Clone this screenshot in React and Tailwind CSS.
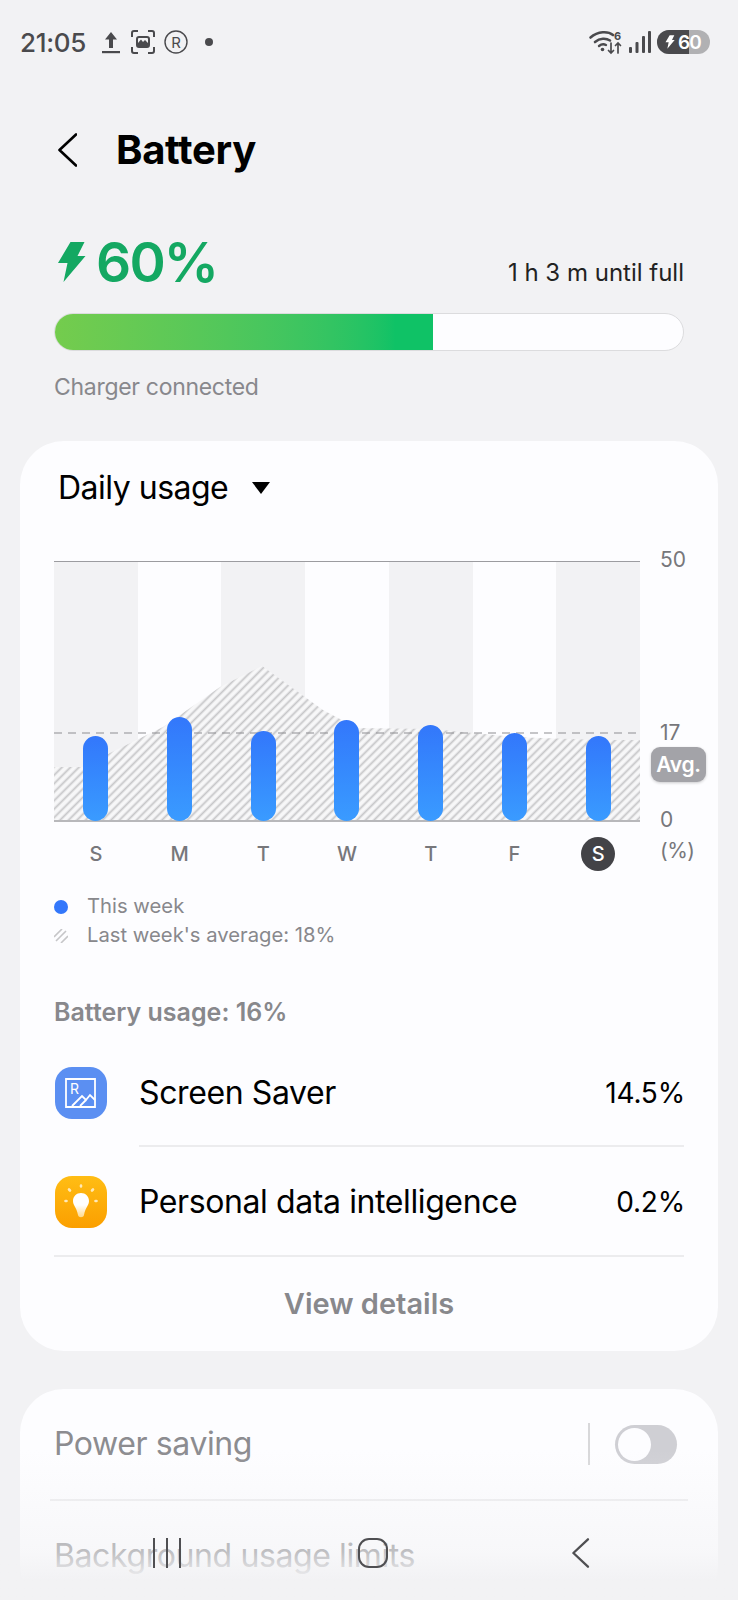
const days = [
  { label: "S", top: 736 },
  { label: "M", top: 717 },
  { label: "T", top: 731 },
  { label: "W", top: 720 },
  { label: "T", top: 725 },
  { label: "F", top: 733 },
  { label: "S", top: 736, today: true },
];

const PLOT_BOTTOM = 821;

function Chevron({ className }) {
  return (
    <svg viewBox="0 0 20 34" fill="none" className={className}>
      <path d="M19 1.5 2.5 17 19 32.5" stroke="currentColor" strokeWidth="2.6" strokeLinecap="round" strokeLinejoin="round" />
    </svg>
  );
}

function Bolt({ className }) {
  return (
    <svg viewBox="0 0 28 42" className={className}>
      <path d="M13 1h14l-7 14h8L6 41l4-19H0.5z" fill="currentColor" />
    </svg>
  );
}

function StatusBar() {
  return (
    <div className="h-[84px] flex items-center pl-[20px] pr-[28px] text-[#4a4a4d]">
      <span className="text-[26px] font-medium tracking-[-0.3px] w-[82px]">21:05</span>
      <svg viewBox="0 0 18 24" className="w-[18px] h-[24px]">
        <path d="M9 2 15 9.5H11V18H7V9.5H3z" fill="currentColor" />
        <rect x="0" y="21" width="18" height="2.2" fill="currentColor" />
      </svg>
      <svg viewBox="0 0 24 24" className="w-[24px] h-[24px] ml-[11px]" fill="none" stroke="currentColor" strokeWidth="2">
        <path d="M7 1H3Q1 1 1 3V7M17 1H21Q23 1 23 3V7M1 17V21Q1 23 3 23H7M23 17V21Q23 23 21 23H17" />
        <rect x="6" y="7" width="12" height="10" rx="2" />
        <path d="M7 13 10 9.500 12 12 14 10 17 13V16H7z" fill="currentColor" stroke="none" />
      </svg>
      <svg viewBox="0 0 24 24" className="w-[24px] h-[24px] ml-[9px]" fill="none" stroke="currentColor" strokeWidth="1.4">
        <circle cx="12" cy="12" r="11" />
        <text x="12" y="17.500" textAnchor="middle" fontSize="15" fill="currentColor" stroke="none" fontFamily="Inter, sans-serif">R</text>
      </svg>
      <span className="w-[8px] h-[8px] rounded-full bg-[#4a4a4d] ml-[17px]" />
      <div className="ml-auto flex items-center">
        <svg viewBox="0 0 34 24" className="w-[34px] h-[24px] overflow-visible" fill="none" stroke="currentColor" strokeLinecap="round">
          <path d="M1.500 7.500C9 1 19 1 24 5" strokeWidth="2.6" />
          <path d="M6 12C11 8 17 8 21 10.500" strokeWidth="2.6" />
          <path d="M10 16C12.500 14 15 14 17 15" strokeWidth="2.4" />
          <circle cx="13.500" cy="19.500" r="1.800" fill="currentColor" stroke="none" />
          <path d="M22 13V23M19.500 20.500 22 23 24.500 20.500M29 23V13M26.500 15.500 29 13 31.500 15.500" strokeWidth="1.700" />
          <text x="25" y="10" fontSize="11" fontWeight="700" fill="currentColor" stroke="none" fontFamily="Inter, sans-serif">6</text>
        </svg>
        <svg viewBox="0 0 22 24" className="w-[22px] h-[24px] ml-[6px]" fill="currentColor">
          <rect x="0" y="17" width="3" height="6" rx="1" />
          <rect x="6.500" y="12" width="3" height="11" rx="1" />
          <rect x="13" y="6" width="3" height="17" rx="1" />
          <rect x="19" y="1" width="3" height="22" rx="1" />
        </svg>
        <div className="relative ml-[6px] w-[53px] h-[24px] rounded-full overflow-hidden bg-[#b1b1b3]">
          <div className="absolute left-0 top-0 h-full w-[32px] bg-[#4a4a4d]" />
          <div className="relative h-full flex items-center pl-[8px] text-white">
            <Bolt className="w-[10px] h-[14px]" />
            <span className="ml-[3px] text-[19px] leading-none font-semibold tracking-[-0.8px]">60</span>
          </div>
        </div>
      </div>
    </div>
  );
}

function Chart() {
  return (
    <div className="flex mt-[12px]">
      <div className="w-[586px] shrink-0 pt-[14px]">
        <div className="relative h-[261px] border-t border-[#9c9ca0] border-b-2 border-b-[#b8b8bb]">
          <div className="grid grid-cols-7 h-full">
            {days.map((d, i) => (
              <div key={i} className={i % 2 === 0 ? "bg-[#f2f2f4]" : "bg-[#fdfdff]"} />
            ))}
          </div>
          <svg viewBox="0 0 586 259" className="absolute left-0 top-[-1px] w-[586px] h-[259px]">
            <defs>
              <pattern id="hatch" width="6" height="6" patternUnits="userSpaceOnUse" patternTransform="rotate(45)">
                <rect width="6" height="6" fill="#f7f7f8" />
                <line x1="1.500" y1="0" x2="1.500" y2="6" stroke="#c6c6c8" strokeWidth="1.800" />
              </pattern>
            </defs>
            <path
              d="M0 206 L30 206 L56 192 L109 166 L166 126 L208 105 L269 149 L303 167 L377 168 L460 176 L544 179 L586 179 V259 H0 Z"
              fill="url(#hatch)"
            />
            <line x1="0" y1="172" x2="586" y2="172" stroke="#8e8e92" strokeWidth="1.2" strokeDasharray="8 6" />
          </svg>
          <div className="absolute inset-x-0 top-0 -bottom-[1px] grid grid-cols-7 items-end">
            {days.map((d, i) => (
              <div key={i} className="flex justify-center">
                <div
                  className="w-[25px] rounded-full bg-linear-to-b from-[#3377fb] to-[#3a9bff]"
                  style={{ height: PLOT_BOTTOM - d.top }}
                />
              </div>
            ))}
          </div>
        </div>
        <div className="grid grid-cols-7 mt-[15px] h-[34px] text-[20px] font-medium text-[#77777b]">
          {days.map((d, i) => (
            <div key={i} className="flex justify-center items-center">
              {d.today ? (
                <span className="w-[34px] h-[34px] rounded-full bg-[#434347] text-white flex items-center justify-center">
                  {d.label}
                </span>
              ) : (
                d.label
              )}
            </div>
          ))}
        </div>
      </div>
      <div className="pl-[20px] w-[44px] shrink-0 whitespace-nowrap text-[21px] leading-[24px] text-[#77777b]">
        <div className="mt-[1px]">50</div>
        <div className="mt-[149px]">17</div>
        <div className="mt-[2px] -ml-[9px] w-[55px] h-[35px] rounded-[9px] bg-[#a3a3a8] shadow-[0_1px_3px_rgba(0,0,0,0.2)] text-white font-semibold text-[21px] tracking-[-0.3px] flex items-center justify-center">
          Avg.
        </div>
        <div className="mt-[26px]">0</div>
        <div className="mt-[7px] tracking-[-0.5px]">(%)</div>
      </div>
    </div>
  );
}

function ScreenSaverIcon() {
  return (
    <svg viewBox="0 0 52 52" className="w-[52px] h-[52px] shrink-0">
      <rect width="52" height="52" rx="17" fill="#5b8ff2" />
      <path d="M11 12H40V40H11z" fill="none" stroke="#fff" strokeWidth="1.8" />
      <text x="15" y="27" fontSize="14" fill="#fff" fontFamily="Inter, sans-serif">R</text>
      <path d="M17 39 27 29 31 33 35 28 40 33" fill="none" stroke="#fff" strokeWidth="1.8" />
      <path d="M25 39 31 33" fill="none" stroke="#fff" strokeWidth="1.8" />
    </svg>
  );
}

function IdeaIcon() {
  return (
    <svg viewBox="0 0 52 52" className="w-[52px] h-[52px] shrink-0">
      <defs>
        <linearGradient id="amber" x1="0" y1="0" x2="0" y2="1">
          <stop offset="0" stopColor="#ffbd14" />
          <stop offset="1" stopColor="#fb9f00" />
        </linearGradient>
        <linearGradient id="bulb" x1="0" y1="0" x2="0" y2="1">
          <stop offset="0.5" stopColor="#ffffff" />
          <stop offset="1" stopColor="#ffd98a" />
        </linearGradient>
      </defs>
      <rect width="52" height="52" rx="17" fill="url(#amber)" />
      <path d="M26 17C21.500 17 18 20.500 18 25C18 29.500 21.500 31 23 39C23.500 42 28.500 42 29 39C30.500 31 34 29.500 34 25C34 20.500 30.500 17 26 17Z" fill="url(#bulb)" />
      <g stroke="#ffe9b8" strokeWidth="2.6" strokeLinecap="round">
        <path d="M26 9.500V10.500M14 13.500 15 14.500M38 13.500 37 14.500M10.500 25H11.500M40.500 25H41.500" />
      </g>
    </svg>
  );
}

export default function App() {
  return (
    <div
      className="relative w-[738px] h-[1600px] overflow-hidden bg-[#f2f2f4] text-black"
      style={{ fontFamily: "Inter, 'Noto Sans', sans-serif" }}
    >
      <StatusBar />

      <div className="h-[132px] flex items-center pl-[57px]">
        <Chevron className="w-[20px] h-[34px] text-black" />
        <h1 className="ml-[39px] text-[40px] font-bold tracking-[-0.3px]">Battery</h1>
      </div>

      <div className="px-[54px]">
        <div className="mt-[14px] flex justify-between items-end h-[64px]">
          <div className="flex items-center text-[#14a862]">
            <Bolt className="w-[29px] h-[42px] ml-[3px]" />
            <span className="ml-[10px] text-[55px] leading-[64px] font-semibold tracking-[-1.8px]">60%</span>
          </div>
          <span className="text-[24px] leading-[32px] mb-[5px] text-[#222]">1 h 3 m until full</span>
        </div>
        <div className="mt-[19px] h-[38px] rounded-full bg-[#fdfdff] border border-[#dcdcde] overflow-hidden">
          <div className="w-[378px] h-full bg-linear-to-r from-[#74cc4d] to-[#0fc266] to-90%" />
        </div>
        <div className="mt-[20px] text-[23px] leading-[32px] tracking-[-0.3px] text-[#88888c]">Charger connected</div>
      </div>

      <div className="mx-[20px] mt-[38px] rounded-[44px] bg-[#fdfdff] px-[34px]">
        <div className="h-[94px] flex items-center pl-[4px]">
          <span className="text-[32px] tracking-[-0.5px]">Daily usage</span>
          <svg viewBox="0 0 18 12" className="w-[18px] h-[12px] ml-[24px]">
            <path d="M0 0H18L9 12z" fill="#000" />
          </svg>
        </div>

        <Chart />

        <div className="mt-[21px] text-[20.25px] text-[#88888c]">
          <div className="h-[29px] flex items-center">
            <span className="w-[14px] h-[14px] rounded-full bg-[#3377fb]" />
            <span className="ml-[19px]">This week</span>
          </div>
          <div className="h-[29px] flex items-center">
            <svg viewBox="0 0 14 14" className="w-[14px] h-[14px]" stroke="#c6c6c8" strokeWidth="1.6">
              <path d="M0 8 8 0M2 12 12 2M7 14 14 7" />
            </svg>
            <span className="ml-[19px]">Last week's average: 18%</span>
          </div>
        </div>

        <div className="mt-[48px] h-[30px] flex items-center text-[25px] font-semibold text-[#88888c]">
          Battery usage: 16%
        </div>

        <div className="h-[117px] flex items-center pl-[1px] pt-[13px]">
          <ScreenSaverIcon />
          <span className="ml-[32px] text-[32px] tracking-[-0.4px]">Screen Saver</span>
          <span className="ml-auto -mr-[1px] text-[28px] tracking-[-0.2px]">14.5%</span>
        </div>
        <div className="ml-[85px] border-t-2 border-[#ececee]" />
        <div className="h-[108px] flex items-center pl-[1px] pt-[1px]">
          <IdeaIcon />
          <span className="ml-[32px] text-[32px] tracking-[-0.4px]">Personal data intelligence</span>
          <span className="ml-auto -mr-[1px] text-[28px] tracking-[-0.2px]">0.2%</span>
        </div>
        <div className="border-t-2 border-[#ececee]" />
        <div className="h-[94px] flex items-center justify-center text-[29px] font-semibold text-[#88888c]">
          View details
        </div>
      </div>

      <div className="mx-[20px] mt-[38px] rounded-[44px] bg-[#fdfdff]">
        <div className="h-[110px] flex items-center pl-[34px] pr-[41px] text-[32px] tracking-[-0.4px] text-[#8c8c90]">
          <span>Power saving</span>
          <span className="ml-auto w-[2px] h-[42px] bg-[#d8d8da]" />
          <span className="ml-[25px] w-[62px] h-[39px] rounded-full bg-[#cfcfd4] p-[3px]">
            <span className="block w-[33px] h-[33px] rounded-full bg-[#fdfdff]" />
          </span>
        </div>
        <div className="mx-[30px] border-t-2 border-[#ececee]" />
        <div className="h-[109px] flex items-center pl-[34px] text-[32px] tracking-[-0.4px] text-[#8c8c90]">
          Background usage limits
        </div>
      </div>

      <div className="absolute left-0 right-0 bottom-0 h-[150px] bg-linear-to-b from-[#f2f2f400] via-[#f2f2f480] via-[68%] to-[#f2f2f4] to-[87%]" />

      <div className="absolute left-0 right-0 bottom-[32px] h-[30px] text-[#4f4f52]">
        <div className="absolute left-[153px] top-0 flex gap-[11px]">
          <span className="w-[2px] h-[30px] bg-current" />
          <span className="w-[2px] h-[30px] bg-current" />
          <span className="w-[2px] h-[30px] bg-current" />
        </div>
        <span className="absolute left-[358px] top-0 w-[30px] h-[30px] rounded-[11px] border-2 border-current" />
        <Chevron className="absolute left-[570px] top-0 w-[20px] h-[30px]" />
      </div>
    </div>
  );
}
